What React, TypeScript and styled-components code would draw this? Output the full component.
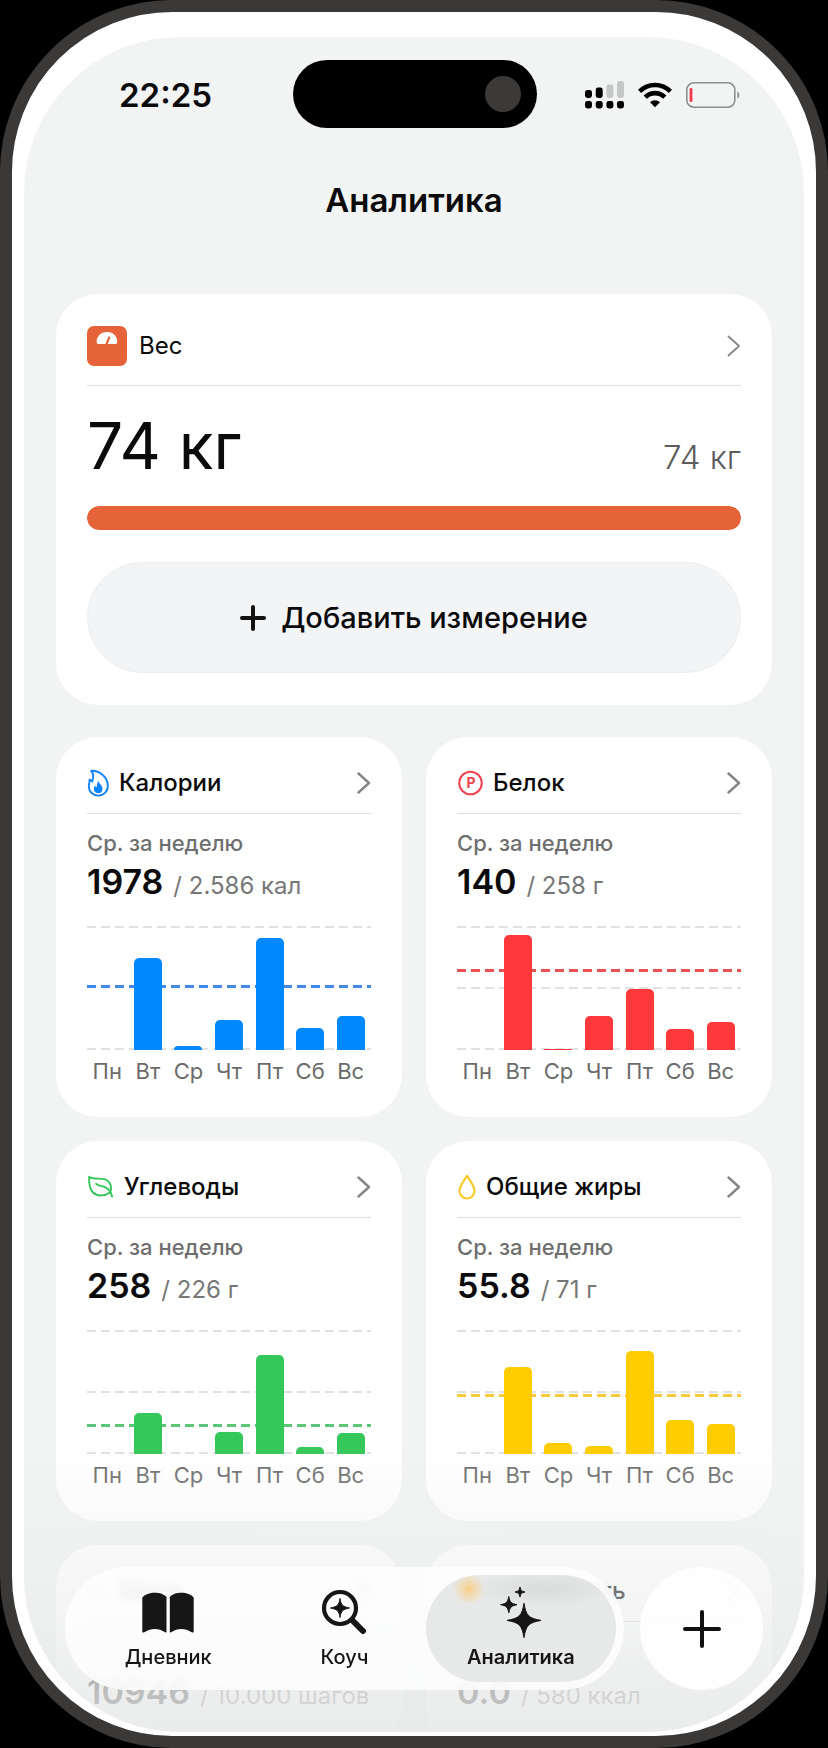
import React from "react";
import styled, { createGlobalStyle } from "styled-components";

const GlobalStyle = createGlobalStyle`
  *, *::before, *::after { box-sizing: border-box; }
  body {
    margin: 0;
    background: #000;
    color: #0b0b0b;
    font-family: Inter, "Liberation Sans", sans-serif;
    -webkit-font-smoothing: antialiased;
  }
  h1, h2, p { margin: 0; }
  button { font: inherit; color: inherit; border: 0; padding: 0; cursor: pointer; }
  a { color: inherit; text-decoration: none; }
`;

const Device = styled.div`
  display: flex;
  height: 100vh;
  padding: 25px 12px 4px;
  border: 12px solid #3b3937;
  border-radius: 172px;
  background: #fff;
`;

const Screen = styled.div`
  position: relative;
  flex: 1;
  min-width: 0;
  overflow: hidden;
  border-radius: 156px;
  background: #f2f4f3;
`;

const StatusBar = styled.div`
  display: grid;
  grid-template-columns: 1fr 244px 1fr;
  align-items: center;
  padding: 23px 0 0 2px;
`;

const Clock = styled.time`
  padding: 2px 0 0 12px;
  text-align: center;
  font-size: 33px;
  line-height: 40px;
  font-weight: 600;
`;

const Island = styled.div`
  display: flex;
  align-items: center;
  justify-content: flex-end;
  height: 68px;
  padding-right: 16px;
  border-radius: 34px;
  background: #000;
`;

const Camera = styled.span`
  width: 36px;
  height: 36px;
  border-radius: 50%;
  background: #3c3a39;
`;

const StatusIcons = styled.div`
  display: flex;
  align-items: center;
  justify-content: center;
  gap: 14px;
  padding: 2px 16px 0 0;
`;

const Title = styled.h1`
  padding: 52px 0 74px;
  text-align: center;
  font-size: 33px;
  line-height: 40px;
  font-weight: 600;
`;

const Content = styled.main`
  display: grid;
  gap: 32px;
  padding: 0 32px;
`;

const Card = styled.section`
  padding: 0 31px 32px;
  border-radius: 42px;
  background: #fff;
`;

const CardLink = styled.a<{ $large?: boolean }>`
  display: flex;
  align-items: center;
  gap: ${(p) => (p.$large ? 12 : 10)}px;
  padding: ${(p) => (p.$large ? "32px 0 19px" : "30px 0 14px")};
  border-bottom: 1px solid #dcdddd;
`;

const CardTitle = styled.h2<{ $light?: boolean }>`
  flex: 1;
  font-size: 24px;
  line-height: 32px;
  font-weight: ${(p) => (p.$light ? 400 : 500)};
  white-space: nowrap;
`;

const WeightRow = styled.div`
  display: flex;
  align-items: baseline;
  justify-content: space-between;
  padding: 24px 0;
`;

const WeightNow = styled.p`
  font-size: 64px;
  line-height: 72px;
  font-weight: 400;
`;

const WeightGoal = styled.p`
  font-size: 33px;
  line-height: 40px;
  font-weight: 300;
  color: #5c5c5c;
`;

const ProgressTrack = styled.div`
  height: 24px;
  border-radius: 12px;
  background: #f3f4f6;
  overflow: hidden;
`;

const ProgressFill = styled.div`
  height: 100%;
  border-radius: 12px;
  background: #e66239;
`;

const AddButton = styled.button`
  display: flex;
  align-items: center;
  justify-content: center;
  gap: 15px;
  width: 100%;
  height: 111px;
  margin-top: 32px;
  border: 1px solid #ebedee;
  border-radius: 56px;
  background: #f3f4f6;
  font-size: 29px;
  font-weight: 500;
`;

const Grid = styled.div`
  display: grid;
  grid-template-columns: repeat(2, minmax(0, 1fr));
  gap: 24px;
`;

const Caption = styled.p`
  padding-top: 15px;
  font-size: 22px;
  line-height: 28px;
  font-weight: 500;
  color: #6f6f6f;
`;

const Value = styled.p<{ $spaced?: boolean }>`
  margin-top: ${(p) => (p.$spaced ? 50 : 5)}px;
  font-size: 34px;
  line-height: 40px;
  font-weight: 600;
  white-space: nowrap;
`;

const Target = styled.span`
  margin-left: 10px;
  font-size: 24px;
  font-weight: 400;
  color: #777;
`;

const Plot = styled.div`
  position: relative;
  display: grid;
  grid-template-columns: repeat(7, 1fr);
  justify-items: center;
  align-items: end;
  height: 124px;
  margin-top: 20px;
`;

const Guide = styled.span<{ $color?: string }>`
  position: absolute;
  left: 0;
  right: 0;
  height: ${(p) => (p.$color ? 3 : 2)}px;
  background: repeating-linear-gradient(
    to right,
    ${(p) => p.$color || "#e0e1e1"} 0 9px,
    transparent 9px 14px
  );
`;

const Bar = styled.span<{ $color: string }>`
  position: relative;
  width: 28px;
  border-radius: 5px 5px 0 0;
  background: ${(p) => p.$color};
`;

const Days = styled.div`
  display: grid;
  grid-template-columns: repeat(7, 1fr);
  margin-top: 7px;
  text-align: center;
  font-size: 22px;
  line-height: 28px;
  color: #6b6b6b;
`;

const BottomFade = styled.div`
  position: absolute;
  left: 0;
  right: 0;
  bottom: 0;
  height: 290px;
  pointer-events: none;
  background: linear-gradient(
    to bottom,
    rgba(234, 235, 235, 0) 0%,
    rgba(234, 235, 235, 0.34) 36%,
    rgba(234, 235, 235, 0.48) 54%,
    rgba(232, 233, 233, 0.8) 86%,
    rgba(232, 233, 233, 0.88) 100%
  );
`;

const Dock = styled.div`
  position: absolute;
  left: 41px;
  right: 41px;
  bottom: 42px;
  display: flex;
  gap: 16px;
`;

const TabBar = styled.nav`
  display: flex;
  flex: 1;
  height: 123px;
  padding: 8px 15px;
  border-radius: 62px;
  background: rgba(253, 254, 253, 0.86);
  backdrop-filter: blur(4px);
`;

const Tab = styled.a<{ $active?: boolean }>`
  display: flex;
  flex: 1;
  flex-direction: column;
  align-items: center;
  gap: 7px;
  margin: 0 -7px;
  padding-top: 11px;
  border-radius: 54px;
  background: ${(p) =>
    p.$active
      ? "radial-gradient(circle at 43px 14px, rgba(250, 205, 130, 0.9), rgba(250, 205, 130, 0) 16px), radial-gradient(ellipse 70px 18px at 118px 14px, #d9dbdb, rgba(217, 219, 219, 0)), #e7e9e8"
      : "transparent"};
  font-size: 20px;
  line-height: 24px;
  font-weight: ${(p) => (p.$active ? 600 : 500)};
  color: #161616;
`;

const TabIcon = styled.span`
  display: flex;
  align-items: center;
  height: 52px;
`;

const RoundButton = styled.button`
  display: flex;
  align-items: center;
  justify-content: center;
  width: 123px;
  height: 123px;
  border-radius: 50%;
  background: rgba(253, 254, 253, 0.96);
`;

const Signal = () => (
  <svg width="39" height="28" viewBox="0 0 39 28" aria-hidden="true">
    <g fill="#000">
      {[0, 10.7, 21.4, 32].map((x) => (
        <rect key={x} x={x} y="20" width="7" height="7.5" rx="2.4" />
      ))}
      <rect x="0" y="9" width="7" height="8" rx="2.4" />
      <rect x="10.7" y="6.5" width="7" height="10.5" rx="2.4" />
    </g>
    <g fill="#c5c6c6">
      <rect x="21.4" y="3.5" width="7" height="13.5" rx="2.4" />
      <rect x="32" y="0" width="7" height="17" rx="2.4" />
    </g>
  </svg>
);

const Wifi = () => (
  <svg width="34" height="26" viewBox="0 0 34 26" aria-hidden="true">
    <g fill="none" stroke="#000" strokeWidth="4.6">
      <path d="M1.6 9.4a21.6 21.6 0 0 1 30.8 0" />
      <path d="M7.2 15.2a13.8 13.8 0 0 1 19.6 0" />
    </g>
    <path d="M17 25.2l-5-5a7.2 7.2 0 0 1 10 0z" fill="#000" />
  </svg>
);

const Battery = () => (
  <svg width="55" height="26" viewBox="0 0 55 26" aria-hidden="true">
    <rect x="0.8" y="0.8" width="48" height="24.4" rx="7" fill="none" stroke="#8e8f8f" strokeWidth="1.6" />
    <rect x="3.6" y="6" width="2.8" height="14" rx="1.2" fill="#f0394a" />
    <path d="M51.4 9.4c2.6.8 2.6 6.400 0 7.200z" fill="#8e8f8f" />
  </svg>
);

const Chevron = ({ thin }: { thin?: boolean }) => (
  <svg width="14" height="22" viewBox="0 0 14 22" aria-hidden="true">
    <path d="M1.500 1.500L12 11L1.500 20.500" fill="none" stroke="#858686" strokeWidth={thin ? 1.8 : 2.4} strokeLinecap="round" strokeLinejoin="round" />
  </svg>
);

const Scale = () => (
  <svg width="40" height="40" viewBox="0 0 40 40" aria-hidden="true">
    <rect width="40" height="40" rx="7" fill="#e66239" />
    <path d="M11.200 18C8 18 9.200 6 20 6s11.800 12 8.800 12z" fill="#fff" />
    <path d="M19.500 18.200l2.700-6.600" stroke="#e66239" strokeWidth="2.200" strokeLinecap="round" />
  </svg>
);

const Flame = () => (
  <svg width="22" height="28" viewBox="0 0 22 28" aria-hidden="true">
    <path
      d="M4.200 1.800C12 1.500 20.800 7.500 20.800 17c0 5.600-4.200 9.600-9.500 9.600S1.800 22.700 1.800 17.800c0-3.400 1.100-4.600.7-7.200 1.200.3 2 1 2.700 2C6.500 9 7.200 5.200 4.200 1.800z"
      fill="none"
      stroke="#1484f5"
      strokeWidth="1.900"
      strokeLinejoin="round"
    />
    <path d="M11.600 12c.3 2.900 3.900 4 3.900 7.900 0 2.600-1.800 4.300-4.300 4.300s-4.300-1.700-4.300-4.100c0-1.400.5-2.500 1.100-3.600.5 1 1 1.500 1.700 1.700.2-2.300.3-4.400 1.900-6.200z" fill="#0a84ff" />
  </svg>
);

const ProteinBadge = () => (
  <svg width="26" height="26" viewBox="0 0 26 26" aria-hidden="true">
    <circle cx="13.500" cy="13" r="11.300" fill="none" stroke="#f0414e" strokeWidth="2" />
    <text x="14" y="18" textAnchor="middle" fontFamily="Inter, sans-serif" fontSize="14" fontWeight="700" fill="#f0414e">
      P
    </text>
  </svg>
);

const Leaf = () => (
  <svg width="27" height="24" viewBox="0 0 27 24" aria-hidden="true">
    <g fill="none" stroke="#34c759" strokeWidth="1.900" strokeLinecap="round" strokeLinejoin="round">
      <path d="M2.200 1.700C6 5 12 2.600 17.500 4.200 23.500 6 25.500 12.300 22.900 17.400 18 21 10 22 5.600 17 2 13 1.900 7 2.200 1.700z" />
      <path d="M9.200 8.800c2 2.400 6.200 1.600 9.700 3.800 3 1.900 5.300 5 6.200 9" />
    </g>
  </svg>
);

const Drop = () => (
  <svg width="19" height="26" viewBox="0 0 19 26" aria-hidden="true">
    <path d="M10 1.800C7.800 5.700 2.500 11.500 2.500 17a7.500 7.500 0 0 0 15 0C17.500 11.500 12.200 5.700 10 1.800z" fill="none" stroke="#fbc926" strokeWidth="2.100" strokeLinejoin="round" />
  </svg>
);

const Steps = () => (
  <svg width="22" height="26" viewBox="0 0 22 26" aria-hidden="true">
    <rect x="2" y="2" width="7" height="17" rx="3.500" fill="#e6e8e8" />
    <rect x="13" y="7" width="7" height="17" rx="3.500" fill="#e6e8e8" />
  </svg>
);

const Energy = () => (
  <svg width="20" height="26" viewBox="0 0 20 26" aria-hidden="true">
    <path d="M12 1L2 15h7l-2 10L18 10h-7z" fill="#ff9f0a" />
  </svg>
);

const Plus = ({ size, stroke }: { size: number; stroke: number }) => (
  <svg width={size} height={size} viewBox={`0 0 ${size} ${size}`} aria-hidden="true">
    <path
      d={`M${size / 2} ${stroke / 2}V${size - stroke / 2}M${stroke / 2} ${size / 2}H${size - stroke / 2}`}
      stroke="#111"
      strokeWidth={stroke}
      strokeLinecap="round"
    />
  </svg>
);

const Book = () => (
  <svg width="52" height="42" viewBox="0 0 52 42" aria-hidden="true">
    <g fill="#161616">
      <path d="M.3 6.600C5 .2 20 .2 24.500 6v34.600c0 1-.6 1.200-1.300.7-6.500-4.500-14.200-4.500-21 0-1 .6-1.900.2-1.900-.8z" />
      <path d="M27.800 6C32.300.2 47.300.2 51.700 6.600v33.900c0 1-.9 1.400-1.900.8-6.800-4.500-14.200-4.500-20.700 0-.7.5-1.300.3-1.300-.7z" />
    </g>
  </svg>
);

const Search = () => (
  <svg width="46" height="46" viewBox="0 0 46 46" aria-hidden="true">
    <circle cx="19" cy="19" r="16" fill="none" stroke="#161616" strokeWidth="4.200" />
    <path d="M31 31L42 42" stroke="#161616" strokeWidth="6" strokeLinecap="round" />
    <path d="M19 9.500c1.100 6.500 2.400 8.100 9.500 9.500-7.100 1.400-8.400 3-9.500 9.500-1.100-6.500-2.400-8.100-9.500-9.500 7.100-1.400 8.400-3 9.500-9.500z" fill="#161616" stroke="#161616" strokeWidth="1" strokeLinejoin="round" />
  </svg>
);

const Sparkles = () => (
  <svg width="44" height="52" viewBox="0 0 44 52" aria-hidden="true">
    <g fill="#161616" stroke="#161616" strokeWidth="1" strokeLinejoin="round">
      <path d="M25 17.200c2 12.300 4.600 15 17 17.200-12.400 2.200-15 4.900-17 17.200-2-12.300-4.600-15-17-17.200 12.400-2.200 15-4.900 17-17.200z" />
      <path d="M9.800 10.500c1 5.700 2.400 7.100 8.200 8.200-5.800 1.100-7.200 2.500-8.200 8.200-1-5.700-2.400-7.100-8.200-8.200 5.800-1.100 7.200-2.500 8.200-8.200z" />
      <path d="M21 1c.7 3.500 1.500 4.300 5 5-3.500.7-4.300 1.500-5 5-.7-3.500-1.500-4.300-5-5 3.500-.7 4.300-1.500 5-5z" />
    </g>
  </svg>
);

const dayNames = ["Пн", "Вт", "Ср", "Чт", "Пт", "Сб", "Вс"];

type Metric = {
  title: string;
  icon: React.ReactNode;
  value: string;
  target: string;
  color?: string;
  lineColor?: string;
  average?: number;
  middle?: boolean;
  bars?: number[];
};

const metrics: Metric[] = [
  { title: "Калории", icon: <Flame />, value: "1978", target: "/ 2.586 кал", color: "#0088ff", lineColor: "#4189e8", average: 62, bars: [0, 92, 4, 30, 112, 22, 34] },
  { title: "Белок", icon: <ProteinBadge />, value: "140", target: "/ 258 г", color: "#ff383c", lineColor: "#ea5054", average: 78, middle: true, bars: [0, 115, 1, 34, 61, 21, 28] },
  { title: "Углеводы", icon: <Leaf />, value: "258", target: "/ 226 г", color: "#34c759", lineColor: "#5bc57a", average: 27, middle: true, bars: [0, 41, 0, 22, 99, 7, 21] },
  { title: "Общие жиры", icon: <Drop />, value: "55.8", target: "/ 71 г", color: "#ffcc00", lineColor: "#f7c93c", average: 57, middle: true, bars: [0, 87, 11, 8, 103, 34, 30] },
  { title: "Шаги", icon: <Steps />, value: "10946", target: "/ 10.000 шагов" },
  { title: "Активность", icon: <Energy />, value: "0.0", target: "/ 580 ккал" },
];

const MetricCard = ({ metric }: { metric: Metric }) => (
  <Card>
    <CardLink href="#">
      {metric.icon}
      <CardTitle>{metric.title}</CardTitle>
      <Chevron />
    </CardLink>
    {metric.bars && <Caption>Ср. за неделю</Caption>}
    <Value $spaced={!metric.bars}>
      {metric.value}
      <Target>{metric.target}</Target>
    </Value>
    {metric.bars && (
      <>
        <Plot>
          <Guide style={{ bottom: 122 }} />
          {metric.middle && <Guide style={{ bottom: 61 }} />}
          <Guide style={{ bottom: 0 }} />
          <Guide $color={metric.lineColor} style={{ bottom: metric.average }} />
          {metric.bars.map((height, i) => (
            <Bar key={dayNames[i]} $color={metric.color!} style={{ height }} />
          ))}
        </Plot>
        <Days>
          {dayNames.map((day) => (
            <span key={day}>{day}</span>
          ))}
        </Days>
      </>
    )}
  </Card>
);

export default function App() {
  return (
    <>
      <GlobalStyle />
      <Device>
        <Screen>
          <StatusBar>
            <Clock>22:25</Clock>
            <Island>
              <Camera />
            </Island>
            <StatusIcons>
              <Signal />
              <Wifi />
              <Battery />
            </StatusIcons>
          </StatusBar>
          <Title>Аналитика</Title>
          <Content>
            <Card>
              <CardLink href="#" $large>
                <Scale />
                <CardTitle $light>Вес</CardTitle>
                <Chevron thin />
              </CardLink>
              <WeightRow>
                <WeightNow>74 кг</WeightNow>
                <WeightGoal>74 кг</WeightGoal>
              </WeightRow>
              <ProgressTrack>
                <ProgressFill style={{ width: "100%" }} />
              </ProgressTrack>
              <AddButton type="button">
                <Plus size={26} stroke={4} />
                Добавить измерение
              </AddButton>
            </Card>
            <Grid>
              {metrics.map((metric) => (
                <MetricCard key={metric.title} metric={metric} />
              ))}
            </Grid>
          </Content>
          <BottomFade />
          <Dock>
            <TabBar>
              <Tab href="#">
                <TabIcon>
                  <Book />
                </TabIcon>
                Дневник
              </Tab>
              <Tab href="#">
                <TabIcon>
                  <Search />
                </TabIcon>
                Коуч
              </Tab>
              <Tab href="#" $active aria-current="page">
                <TabIcon>
                  <Sparkles />
                </TabIcon>
                Аналитика
              </Tab>
            </TabBar>
            <RoundButton type="button" aria-label="Добавить">
              <Plus size={38} stroke={4} />
            </RoundButton>
          </Dock>
        </Screen>
      </Device>
    </>
  );
}
